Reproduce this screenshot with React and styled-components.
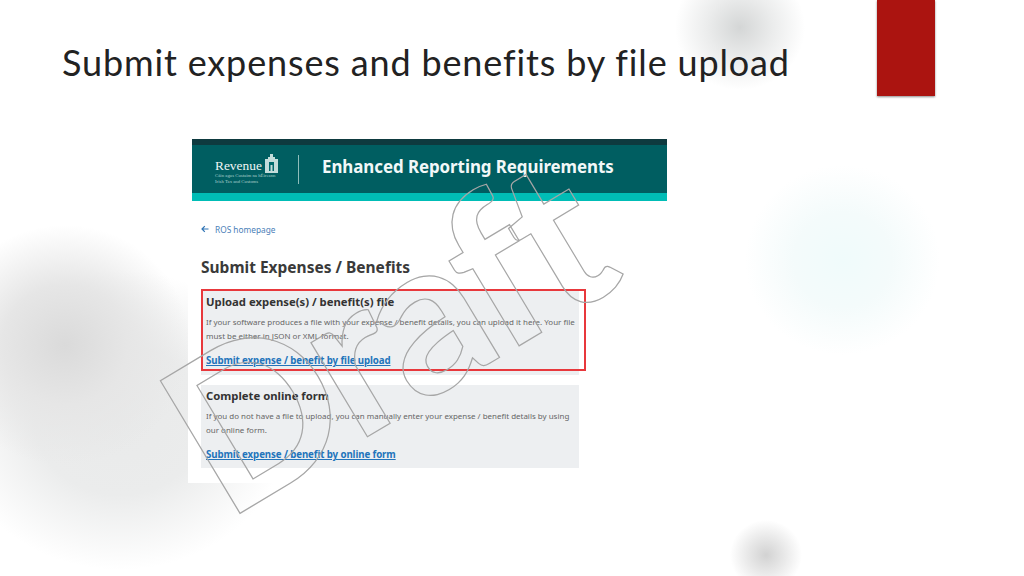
import styled, { createGlobalStyle } from 'styled-components'

const GlobalStyle = createGlobalStyle`
html, body {
  margin: 0;
  padding: 0;
  background: #fff;
}
`

const Slide = styled.div`
position: relative;
width: 1024px;
height: 576px;
overflow: hidden;
background: #fff;
`
const Blob = styled.div`
position: absolute;
left: ${props => props.$x}px;
top: ${props => props.$y}px;
width: ${props => props.$w}px;
height: ${props => props.$h}px;
border-radius: 50%;
background: radial-gradient(closest-side, ${props => props.$color}, ${props => props.$mid} 50%, rgba(255,255,255,0));
`
const Header = styled.div`
position: relative;
display: flex;
height: 139px;
`
const SlideTitle = styled.h1`
margin: 0;
padding: 39px 0 0 62px;
font-family: "Lato", "Liberation Sans", sans-serif;
font-weight: 400;
font-size: 36px;
line-height: 46px;
letter-spacing: 0.85px;
color: #222;
`
const Tab = styled.div`
width: 58px;
height: 96px;
margin-left: auto;
margin-right: 89px;
background: #ab1410;
box-shadow: 0 1px 2px rgba(0,0,0,0.45);
`
const Panel = styled.div`
position: relative;
width: 479px;
height: 344px;
margin-left: 188px;
background: #fff;
font-family: "Noto Sans", "Liberation Sans", sans-serif;
`
const Banner = styled.div`
display: flex;
align-items: center;
height: 48px;
margin-left: 4px;
border-top: 6px solid #0e3a3f;
border-bottom: 8px solid #00bdb6;
background: #005e61;
`
const Logo = styled.div`
display: flex;
flex-direction: column;
width: 63px;
margin-left: 23px;
color: #d5e8e6;
`
const LogoTop = styled.div`
display: flex;
align-items: flex-end;
justify-content: space-between;
`
const LogoName = styled.span`
font-family: "Liberation Serif", serif;
font-size: 13.4px;
line-height: 14px;
color: #eef6f5;
`
const LogoLine = styled.span`
font-family: "Liberation Serif", serif;
font-size: 4.8px;
line-height: 5.5px;
white-space: nowrap;
color: #a9cfcc;
`
const Divider = styled.div`
width: 1px;
height: 29px;
margin: 0 23px 0 20px;
background: #8fbdba;
`
const BannerTitle = styled.div`
padding-bottom: 5px;
font-size: 16.9px;
font-weight: 700;
color: #f2f8f8;
letter-spacing: -0.05px;
`
const Body = styled.div`
display: flex;
flex-direction: column;
padding: 21px 0 0 13px;
`
const BackLink = styled.div`
display: flex;
align-items: center;
gap: 6px;
height: 14px;
font-size: 8.3px;
color: #4a80b8;
`
const PageHeading = styled.h2`
margin: 20px 0 13px;
font-size: 15.5px;
line-height: 22px;
font-weight: 700;
color: #3a3a3a;
`
const Card = styled.div`
position: relative;
display: flex;
flex-direction: column;
width: 378px;
height: ${props => props.$h}px;
margin-bottom: ${props => props.$gap}px;
padding: 2px 0 0 5px;
box-sizing: border-box;
background: #edeff1;
`
const CardTitle = styled.h3`
margin: 0 0 5px;
font-size: 11.3px;
line-height: 17px;
font-weight: 700;
color: #333;
`
const CardText = styled.p`
margin: 0 0 11px;
font-size: 7.96px;
line-height: 14px;
white-space: nowrap;
color: #666;
`
const CardLink = styled.a`
font-size: 9.7px;
line-height: 14px;
font-weight: 700;
letter-spacing: -0.1px;
color: #2274bb;
text-decoration: underline;
`
const Highlight = styled.div`
position: absolute;
left: 0;
top: -2px;
width: 385px;
height: 82px;
box-sizing: border-box;
border: 2px solid #e8383c;
`
const Watermark = styled.div`
position: absolute;
left: 150px;
top: 226px;
font-family: "Lato", "Liberation Sans", sans-serif;
font-size: 214px;
line-height: 214px;
font-weight: 700;
letter-spacing: -8px;
color: transparent;
-webkit-text-stroke: 1.2px #a6a6a6;
transform: rotate(-31deg);
transform-origin: 50% 50%;
pointer-events: none;
`

const App = () => {
    return (
        <Slide>
            <GlobalStyle />
            <Blob $x={-50} $y={270} $w={340} $h={300} $color="#e9eaea" $mid="#ebecec" />
            <Blob $x={-60} $y={225} $w={250} $h={240} $color="#dadada" $mid="#e6e6e6" />
            <Blob $x={675} $y={-35} $w={130} $h={125} $color="#d4d6d6" $mid="#ebecec" />
            <Blob $x={730} $y={520} $w={72} $h={70} $color="#d2d2d2" $mid="#e8e8e8" />
            <Blob $x={745} $y={165} $w={195} $h={190} $color="#f0fbfb" $mid="#f4fbfb" />
            <Header>
                <SlideTitle>Submit expenses and benefits by file upload</SlideTitle>
                <Tab />
            </Header>
            <Panel>
                <Banner>
                    <Logo>
                        <LogoTop>
                            <LogoName>Revenue</LogoName>
                            <svg width="13" height="19" viewBox="0 0 13 19">
                                <path d="M5 0h3v3h2v2h3v14H0V5h3V3h2z" fill="#c4dcda" />
                                <path d="M4 8h5v9H4z" fill="#00696b" />
                                <path d="M5.5 11h2v6h-2z" fill="#c4dcda" />
                            </svg>
                        </LogoTop>
                        <LogoLine>Cáin agus Custaim na hÉireann</LogoLine>
                        <LogoLine>Irish Tax and Customs</LogoLine>
                    </Logo>
                    <Divider />
                    <BannerTitle>Enhanced Reporting Requirements</BannerTitle>
                </Banner>
                <Body>
                    <BackLink>
                        <svg width="8" height="8" viewBox="0 0 8 8">
                            <path d="M7.5 4H1M3.8 1.2 1 4l2.8 2.8" fill="none" stroke="#2f74b5" strokeWidth="1.2" />
                        </svg>
                        ROS homepage
                    </BackLink>
                    <PageHeading>Submit Expenses / Benefits</PageHeading>
                    <Card $h={84} $gap={10}>
                        <CardTitle>Upload expense(s) / benefit(s) file</CardTitle>
                        <CardText>
                            If your software produces a file with your expense / benefit details, you can upload it here. Your file<br />
                            must be either in JSON or XML format.
                        </CardText>
                        <CardLink>Submit expense / benefit by file upload</CardLink>
                        <Highlight />
                    </Card>
                    <Card $h={83} $gap={0}>
                        <CardTitle>Complete online form</CardTitle>
                        <CardText>
                            If you do not have a file to upload, you can manually enter your expense / benefit details by using<br />
                            our online form.
                        </CardText>
                        <CardLink>Submit expense / benefit by online form</CardLink>
                    </Card>
                </Body>
            </Panel>
            <Watermark>Draft</Watermark>
        </Slide>
    )
}

export default App
